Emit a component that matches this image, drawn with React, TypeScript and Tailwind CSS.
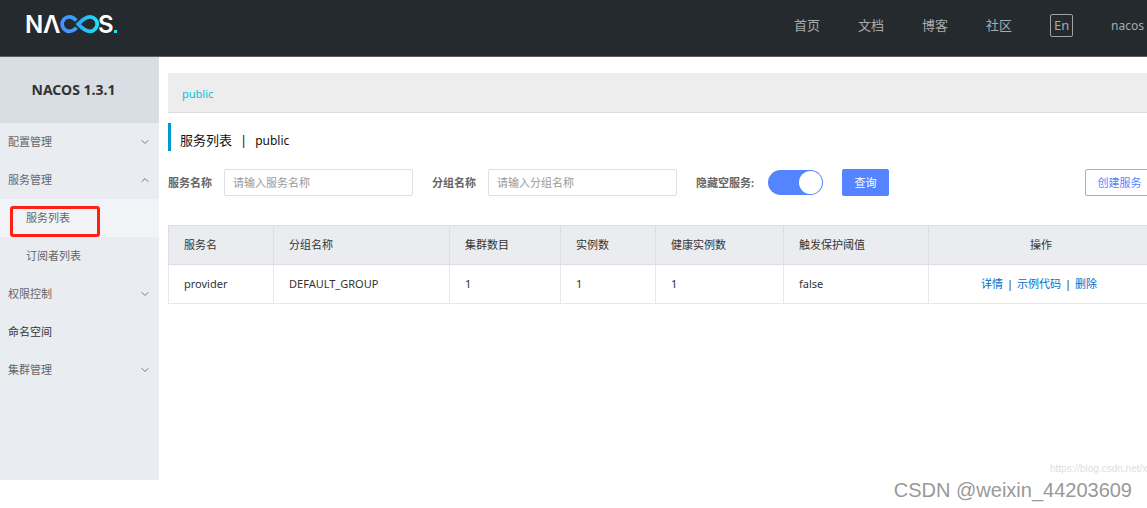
import { useState } from "react";
import clsx from "clsx";
import { ChevronDown, ChevronUp } from "lucide-react";

const navLinks = ["首页", "文档", "博客", "社区"];

const menu = [
  { label: "配置管理", arrow: "down" },
  { label: "服务管理", arrow: "up" },
  { label: "服务列表", child: true, active: true },
  { label: "订阅者列表", child: true },
  { label: "权限控制", arrow: "down" },
  { label: "命名空间", dark: true },
  { label: "集群管理", arrow: "down" },
];

const columns = [
  { title: "服务名", width: "w-[105px]" },
  { title: "分组名称", width: "w-[176px]" },
  { title: "集群数目", width: "w-[111px]" },
  { title: "实例数", width: "w-[95px]" },
  { title: "健康实例数", width: "w-[128px]" },
  { title: "触发保护阈值", width: "w-[145px]" },
];

const services = [["provider", "DEFAULT_GROUP", "1", "1", "1", "false"]];

function Logo() {
  return (
    <svg width="98" height="40" viewBox="-4 -8 98 40" role="img" aria-label="NACOS">
      <defs>
        <linearGradient id="loop" gradientUnits="userSpaceOnUse" x1="34" y1="0" x2="73" y2="0">
          <stop offset="0" stopColor="#4a8cff" />
          <stop offset="0.5" stopColor="#2fa8f8" />
          <stop offset="1" stopColor="#1be6f5" />
        </linearGradient>
      </defs>
      <g fill="#fff" className="font-['Inter',sans-serif] text-[24px] font-semibold">
        <text x="-1" y="21">N</text>
        <text x="17" y="21">Λ</text>
        <text x="72" y="21">S</text>
      </g>
      <g fill="none" stroke="url(#loop)" strokeWidth="3.8">
        <path d="M50.5 15.8 C48 18.5 46 19.3 43.3 19.3 A7.2 7.2 0 0 1 43.3 4.9 C46 4.9 48 6 50.3 8.6" />
        <path d="M52.2 12.1 C56 8 59.5 4.9 64 4.9 A7.2 7.2 0 0 1 64 19.3 C59.5 19.3 56 16.2 52.2 12.1 Z" />
      </g>
      <rect x="88" y="18" width="3" height="3" fill="#1be6f5" />
    </svg>
  );
}

function Header() {
  return (
    <header className="flex h-[57px] items-center justify-between border-b border-[#5b5d61] bg-[#252a2f] pr-[3px] pl-[22px]">
      <a href="#home" className="-mt-2">
        <Logo />
      </a>
      <nav className="-mt-1 flex items-center gap-[38px] text-[13px] text-[#a9abad]">
        {navLinks.map((label) => (
          <a key={label} href="#nav">
            {label}
          </a>
        ))}
        <button className="-mt-0.5 h-[23px] w-[23px] rounded-xs border border-[#a0a2a4] text-[13px] leading-5">
          En
        </button>
        <a href="#user" className="text-xs">
          nacos
        </a>
      </nav>
    </header>
  );
}

function Sidebar() {
  return (
    <aside className="w-[159px] shrink-0 bg-[#e9edf2] pb-[91px]">
      <h1 className="flex h-[66px] items-center justify-center bg-[#d9dde4] pr-3 text-sm font-bold text-[#333]">
        NACOS 1.3.1
      </h1>
      <ul>
        {menu.map((item) => (
          <li key={item.label}>
            <a
              href="#menu"
              className={clsx(
                "flex h-[38px] items-center justify-between pr-2",
                item.child ? "pl-[26px]" : "pl-2",
                item.active && "bg-[#f1f3f7]",
                item.dark ? "text-[#333]" : "text-[#666]",
              )}
            >
              {item.active ? (
                <span className="relative">
                  {item.label}
                  {/* red marker around the current page */}
                  <span className="absolute -top-[4px] -left-4 h-[31px] w-[90px] rounded-[3px] border-3 border-[#ff2213]" />
                </span>
              ) : (
                item.label
              )}
              {item.arrow === "down" && <ChevronDown className="size-3 text-[#777]" strokeWidth={2} />}
              {item.arrow === "up" && <ChevronUp className="size-3 text-[#777]" strokeWidth={2} />}
            </a>
          </li>
        ))}
      </ul>
    </aside>
  );
}

function SearchBar() {
  const [hideEmpty, setHideEmpty] = useState(true);
  const field =
    "ml-[12px] mr-[19px] h-[27px] w-[189px] rounded-xs border border-[#dcdee3] px-2 outline-none placeholder:text-[#999]";

  return (
    <form className="mt-[18px] flex items-center" onSubmit={(e) => e.preventDefault()}>
      <label htmlFor="service" className="pt-0.5 font-bold">
        服务名称
      </label>
      <input id="service" className={field} placeholder="请输入服务名称" />
      <label htmlFor="group" className="pt-0.5 font-bold">
        分组名称
      </label>
      <input id="group" className={field} placeholder="请输入分组名称" />
      <label htmlFor="hide-empty" className="pt-0.5 font-bold">
        隐藏空服务:
      </label>
      <input
        id="hide-empty"
        type="checkbox"
        role="switch"
        checked={hideEmpty}
        onChange={(e) => setHideEmpty(e.target.checked)}
        className="ml-[14px] flex h-[25px] w-[55px] appearance-none items-center rounded-full bg-[#ccc] p-px before:size-[23px] before:rounded-full before:bg-white checked:justify-end checked:bg-[#5584ff]"
      />
      <button type="submit" className="ml-[19px] h-[27px] w-[47px] rounded-xs bg-[#5584ff] pt-0.5 text-white">
        查询
      </button>
      <button type="button" className="ml-auto h-[27px] w-[69px] rounded-xs border border-[#8fb0ff] pt-0.5 text-[#5584ff]">
        创建服务
      </button>
    </form>
  );
}

function ServiceTable() {
  return (
    <table className="mt-[29px] w-full table-fixed border-collapse text-left text-[#333]">
      <thead>
        <tr className="h-[39px] bg-[#ebecf0]">
          {columns.map((col) => (
            <th key={col.title} className={clsx(col.width, "border border-[#dcdee3] px-[15px] font-normal")}>
              {col.title}
            </th>
          ))}
          <th className="border border-[#dcdee3] text-center font-normal">操作</th>
        </tr>
      </thead>
      <tbody>
        {services.map((row) => (
          <tr key={row[0]} className="h-[39px]">
            {row.map((cell, i) => (
              <td key={i} className="border border-[#e6e7eb] px-[15px]">
                {cell}
              </td>
            ))}
            <td className="border border-[#e6e7eb] pr-1 text-center">
              <a href="#detail" className="text-[#0070cc]">详情</a>
              <span className="mx-1">|</span>
              <a href="#code" className="text-[#0070cc]">示例代码</a>
              <span className="mx-1">|</span>
              <a href="#delete" className="text-[#0070cc]">删除</a>
            </td>
          </tr>
        ))}
      </tbody>
    </table>
  );
}

export default function App() {
  return (
    <div className="relative min-h-screen overflow-hidden bg-white font-['Noto_Sans','Noto_Sans_CJK_SC',sans-serif] text-[11px] text-[#666]">
      <Header />
      <div className="flex">
        <Sidebar />
        <main className="-mr-[7px] min-w-0 flex-1 pt-4 pl-[9px]">
          <div className="flex h-10 items-center border-b border-[#dcdcdc] bg-[#ededed] px-[14px] pt-1">
            <a href="#public" className="text-[#00c1de]">
              public
            </a>
          </div>
          <h2 className="mt-[10px] flex h-7 items-center border-l-3 border-[#0098d0] pt-2 pl-[9px] text-[13px] text-[#111]">
            <span>服务列表</span>
            <span className="mx-2">|</span>
            <span className="text-xs">public</span>
          </h2>
          <SearchBar />
          <ServiceTable />
        </main>
      </div>
      <div className="absolute top-[461px] left-[1050px] font-['Liberation_Sans',sans-serif] text-[10px] whitespace-nowrap text-[#dedede]">
        https://blog.csdn.net/x
      </div>
      <div className="absolute right-[15px] bottom-1 font-['Liberation_Sans',sans-serif] text-xl text-[#999]">
        CSDN @weixin_44203609
      </div>
    </div>
  );
}
